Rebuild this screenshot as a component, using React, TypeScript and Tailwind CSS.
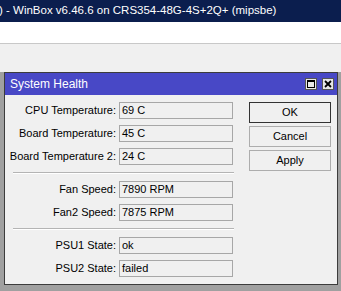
import React from "react";

const rows1 = [
  ["CPU Temperature:", "69 C"],
  ["Board Temperature:", "45 C"],
  ["Board Temperature 2:", "24 C"],
];
const rows2 = [
  ["Fan Speed:", "7890 RPM"],
  ["Fan2 Speed:", "7875 RPM"],
];
const rows3 = [
  ["PSU1 State:", "ok"],
  ["PSU2 State:", "failed"],
];

function Row({ label, value }: { label: string; value: string }) {
  return (
    <div className="flex items-center h-[17px]">
      <div className="w-[114px] text-right pr-[3px] whitespace-nowrap">{label}</div>
      <div className="w-[114px] h-[17px] border border-[#a7a7a7] bg-[#f0f0f0] pl-[2px] leading-[15px] whitespace-nowrap">
        {value}
      </div>
    </div>
  );
}

function Sep() {
  return <div className="ml-[8px] w-[221px] h-[2px] border-t border-[#b4b4b4] border-b border-b-white my-[7px]" />;
}

export default function App() {
  return (
    <div
      className="w-[341px] h-[291px] overflow-hidden bg-[#a0a0a0] flex flex-col text-[11px] text-black"
      style={{ fontFamily: '"Liberation Sans", Arial, sans-serif' }}
    >
      <div className="h-[22px] bg-[#0b1e4e] text-white text-[11.5px] flex items-center whitespace-nowrap pl-0 shrink-0">
        <span className="-ml-[1px]">) - WinBox v6.46.6 on CRS354-48G-4S+2Q+ (mipsbe)</span>
      </div>
      <div className="h-[21px] bg-white shrink-0" />
      <div className="h-px bg-[#c8c8c8] shrink-0" />
      <div className="h-[28px] bg-[#f0f0f0] shrink-0" />
      <div className="flex-1 pl-[4px] pr-[3px]">
        <div className="h-[213px] border border-[#3c3c3c] bg-[#f0f0f0] flex flex-col">
          <div className="h-[22px] bg-[#4848c6] text-white text-[12px] flex items-center pl-[5px] shrink-0">
            <span className="flex-1">System Health</span>
            <div className="flex gap-[5px] mr-[3px]">
              <div className="w-[12px] h-[12px] bg-[#e8e8e8] border border-[#555] flex items-center justify-center">
                <div className="w-[8px] h-[8px] border border-black border-t-2" />
              </div>
              <div className="w-[12px] h-[12px] bg-[#e8e8e8] border border-[#555] flex items-center justify-center">
                <svg width="8" height="8" viewBox="0 0 8 8">
                  <path d="M1 1L7 7M7 1L1 7" stroke="black" strokeWidth="1.8" />
                </svg>
              </div>
            </div>
          </div>
          <div className="flex pt-[7px]">
            <div className="flex flex-col">
              <div className="flex flex-col gap-[6px]">
                {rows1.map(([l, v]) => (
                  <Row key={l} label={l} value={v} />
                ))}
              </div>
              <Sep />
              <div className="flex flex-col gap-[6px]">
                {rows2.map(([l, v]) => (
                  <Row key={l} label={l} value={v} />
                ))}
              </div>
              <Sep />
              <div className="flex flex-col gap-[6px]">
                {rows3.map(([l, v]) => (
                  <Row key={l} label={l} value={v} />
                ))}
              </div>
            </div>
            <div className="ml-[15px] flex flex-col gap-[3px] w-[82px]">
              <div className="h-[21px] border border-[#333] bg-[#f0f0f0] flex items-center justify-center">OK</div>
              <div className="h-[21px] border border-[#adadad] bg-[#f0f0f0] flex items-center justify-center">Cancel</div>
              <div className="h-[21px] border border-[#adadad] bg-[#f0f0f0] flex items-center justify-center">Apply</div>
            </div>
          </div>
        </div>
      </div>
    </div>
  );
}
